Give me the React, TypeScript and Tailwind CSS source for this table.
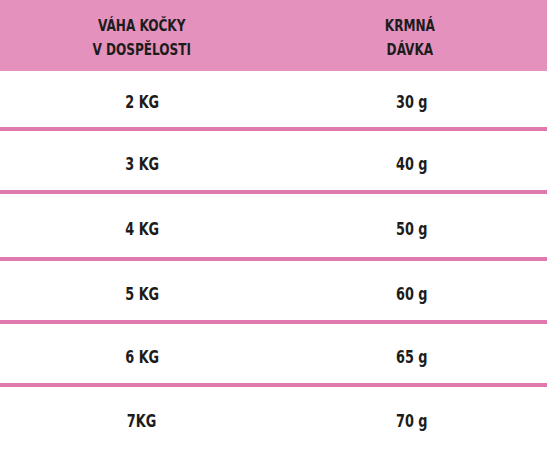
const rows = [
  { weight: "2 KG", dose: "30 g", h: "h-[60px]" },
  { weight: "3 KG", dose: "40 g", h: "h-[63px]" },
  { weight: "4 KG", dose: "50 g", h: "h-[67px]" },
  { weight: "5 KG", dose: "60 g", h: "h-[63px]" },
  { weight: "6 KG", dose: "65 g", h: "h-[63px]" },
  { weight: "7KG", dose: "70 g", h: "h-[62px]" },
];

const font = "font-['DejaVu_Sans_Condensed','DejaVu_Sans',sans-serif]";

// condensed look: squeeze the text horizontally
const Squeeze = ({ children }: { children: React.ReactNode }) => (
  <span className="inline-block scale-x-[0.84] origin-center">{children}</span>
);

export default function App() {
  return (
    <div className={`w-[547px] h-[449px] bg-white text-[#1c1c1c] font-bold overflow-hidden ${font}`}>
      <div className="grid grid-cols-2 h-[71px] bg-[#e492bd] items-center text-[16px] leading-[24px] pt-1">
        <div className="text-center pl-[10px]">
          <Squeeze>
            VÁHA KOČKY
            <br />
            V DOSPĚLOSTI
          </Squeeze>
        </div>
        <div className="text-center">
          <Squeeze>
            KRMNÁ
            <br />
            DÁVKA
          </Squeeze>
        </div>
      </div>
      {rows.map((r, i) => (
        <div
          key={r.weight}
          className={`grid grid-cols-2 items-center text-[17px] pt-2 ${r.h} ${
            i < rows.length - 1 ? "border-b-4 border-[#e07aae]" : ""
          }`}
        >
          <div className="text-center pl-[10px]">
            <Squeeze>{r.weight}</Squeeze>
          </div>
          <div className="text-center pl-[4px]">
            <Squeeze>{r.dose}</Squeeze>
          </div>
        </div>
      ))}
    </div>
  );
}
